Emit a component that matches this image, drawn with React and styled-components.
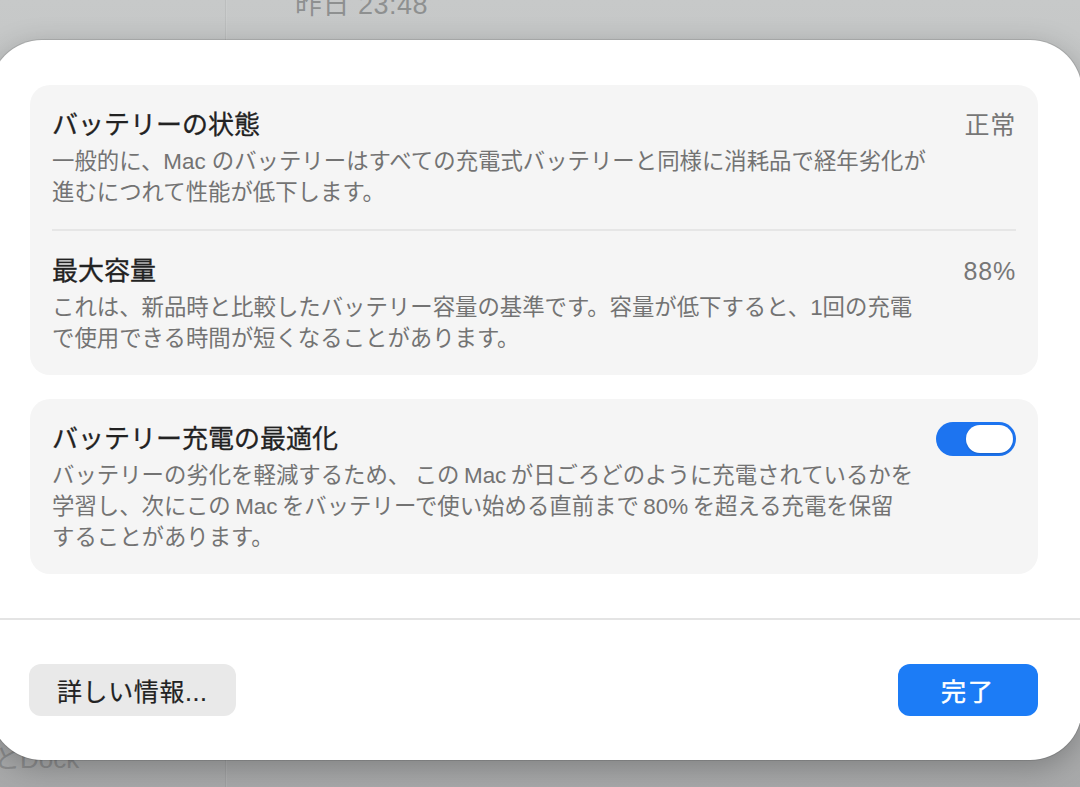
import React, { useState } from "react";
import styled, { createGlobalStyle } from "styled-components";

const FONT = `"Liberation Sans", "Noto Sans CJK JP", "Noto Sans", sans-serif`;

const GlobalStyle = createGlobalStyle`
  html, body {
    margin: 0;
    padding: 0;
    width: 1080px;
    height: 787px;
    overflow: hidden;
    font-family: ${FONT};
  }
`;

const Screen = styled.div`
  position: relative;
  width: 1080px;
  height: 787px;
  overflow: hidden;
  display: flex;
  background: linear-gradient(180deg, #c7c9c9 0%, #b9bbbb 50%, #a8a9aa 100%);
`;

const Sidebar = styled.div`
  width: 226px;
  border-right: 1px solid rgba(0, 0, 0, 0.05);
  display: flex;
  flex-direction: column;
  justify-content: flex-end;
  padding-bottom: 12px;
  box-sizing: border-box;
`;

const SidebarItem = styled.div`
  margin-left: -6px;
  font-size: 26px;
  color: #8c8d8e;
  white-space: nowrap;
`;

const MainPane = styled.div`
  flex: 1;
  padding-left: 68px;
  border-left: 1px solid rgba(255, 255, 255, 0.08);
`;

const Timestamp = styled.div`
  margin-top: -17px;
  font-size: 27px;
  color: #8e9090;
  letter-spacing: 0.5px;
`;

const Dialog = styled.div`
  position: absolute;
  left: -10px;
  top: 40px;
  width: 1092px;
  height: 720px;
  background: #ffffff;
  border-radius: 52px;
  box-shadow: 0 0 0 1px rgba(0, 0, 0, 0.1), 0 8px 30px rgba(0, 0, 0, 0.25);
  display: flex;
  flex-direction: column;
  overflow: hidden;
`;

const Content = styled.div`
  padding: 45px 44px 44px 40px;
  display: flex;
  flex-direction: column;
  gap: 24px;
`;

const Panel = styled.div`
  background: #f5f5f5;
  border-radius: 20px;
  padding: 0 22px;
`;

const Row = styled.div`
  display: flex;
  justify-content: space-between;
  align-items: flex-start;
  padding: 23px 0 21px;
  & + & {
    border-top: 2px solid #e6e6e6;
  }
`;

const TextBlock = styled.div`
  display: flex;
  flex-direction: column;
  gap: 4px;
`;

const Title = styled.div`
  font-size: 26px;
  font-weight: 400;
  line-height: 34px;
  color: #222222;
  -webkit-text-stroke: 0.3px #222222;
`;

const Desc = styled.div`
  font-size: 22.4px;
  line-height: 31px;
  color: #737373;
  white-space: nowrap;
`;

const Value = styled.div`
  font-size: 25px;
  line-height: 34px;
  color: #777777;
  letter-spacing: 0.8px;
`;

const Toggle = styled.button`
  width: 80px;
  height: 34px;
  border: none;
  padding: 3px;
  border-radius: 17px;
  background: ${(p) => (p.$on ? "#1d74f0" : "#d9d9d9")};
  display: flex;
  justify-content: ${(p) => (p.$on ? "flex-end" : "flex-start")};
  cursor: pointer;
`;

const Knob = styled.span`
  width: 47px;
  height: 28px;
  border-radius: 14px;
  background: #ffffff;
  box-shadow: 0 1px 2px rgba(0, 0, 0, 0.15);
`;

const Divider = styled.div`
  height: 2px;
  background: #e4e4e4;
`;

const Footer = styled.div`
  display: flex;
  justify-content: space-between;
  padding: 44px 44px 44px 39px;
`;

const Button = styled.button`
  height: 52px;
  min-width: ${(p) => (p.$primary ? "140px" : "auto")};
  padding: 0 28px 0 28px;
  border: none;
  border-radius: 12px;
  font-family: ${FONT};
  font-size: 25px;
  font-weight: 400;
  color: ${(p) => (p.$primary ? "#ffffff" : "#222222")};
  background: ${(p) => (p.$primary ? "#1c7cf6" : "#e9e9e9")};
  letter-spacing: ${(p) => (p.$primary ? "2px" : "0.6px")};
  -webkit-text-stroke: ${(p) => (p.$primary ? "0.5px #ffffff" : "0.2px #222222")};
`;

const Lines = ({ lines }) => (
  <Desc>
    {lines.map((line, i) => (
      <div key={i}>{line}</div>
    ))}
  </Desc>
);

const App = () => {
  const [optimized, setOptimized] = useState(true);
  return (
    <>
      <GlobalStyle />
      <Screen>
        <Sidebar>
          <SidebarItem>とDock</SidebarItem>
        </Sidebar>
        <MainPane>
          <Timestamp>昨日 23:48</Timestamp>
        </MainPane>

        <Dialog>
          <Content>
            <Panel>
              <Row>
                <TextBlock>
                  <Title>バッテリーの状態</Title>
                  <Lines
                    lines={[
                      "一般的に、Mac のバッテリーはすべての充電式バッテリーと同様に消耗品で経年劣化が",
                      "進むにつれて性能が低下します。",
                    ]}
                  />
                </TextBlock>
                <Value>正常</Value>
              </Row>
              <Row>
                <TextBlock>
                  <Title>最大容量</Title>
                  <Lines
                    lines={[
                      "これは、新品時と比較したバッテリー容量の基準です。容量が低下すると、1回の充電",
                      "で使用できる時間が短くなることがあります。",
                    ]}
                  />
                </TextBlock>
                <Value>88%</Value>
              </Row>
            </Panel>

            <Panel>
              <Row>
                <TextBlock>
                  <Title>バッテリー充電の最適化</Title>
                  <Lines
                    lines={[
                      "バッテリーの劣化を軽減するため、\u2009この\u2009Mac\u2009が日ごろどのように充電されているかを",
                      "学習し、次にこの\u2009Mac\u2009をバッテリーで使い始める直前まで\u200980%\u2009を超える充電を保留",
                      "することがあります。",
                    ]}
                  />
                </TextBlock>
                <Toggle $on={optimized} onClick={() => setOptimized(!optimized)}>
                  <Knob />
                </Toggle>
              </Row>
            </Panel>
          </Content>

          <Divider />

          <Footer>
            <Button>詳しい情報...</Button>
            <Button $primary>完了</Button>
          </Footer>
        </Dialog>
      </Screen>
    </>
  );
};

export default App;
